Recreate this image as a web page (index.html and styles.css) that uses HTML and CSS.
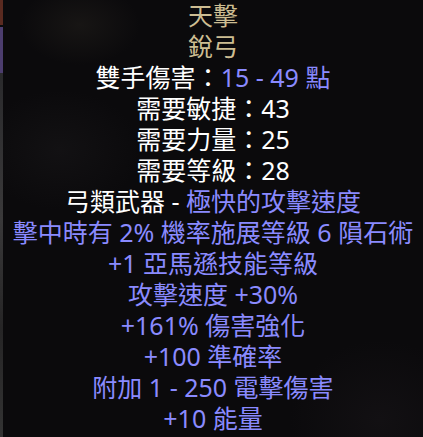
FILE: index.html
```html
<!DOCTYPE html>
<html>
<head>
<meta charset="utf-8">
<link rel="stylesheet" href="styles.css">
</head>
<body>
<div class="frame">
  <div class="edge">
    <div class="edge-red"></div>
    <div class="edge-purple"></div>
    <div class="edge-grey"></div>
  </div>
  <div class="tooltip">
    <div class="line name">天擊</div>
    <div class="line name">銳弓</div>
    <div class="line white">雙手傷害：<span class="blue">15 - 49 點</span></div>
    <div class="line white">需要敏捷：43</div>
    <div class="line white">需要力量：25</div>
    <div class="line white">需要等級：28</div>
    <div class="line white">弓類武器 - <span class="blue">極快的攻擊速度</span></div>
    <div class="line blue">擊中時有 2% 機率施展等級 6 隕石術</div>
    <div class="line blue">+1 亞馬遜技能等級</div>
    <div class="line blue">攻擊速度 +30%</div>
    <div class="line blue">+161% 傷害強化</div>
    <div class="line blue">+100 準確率</div>
    <div class="line blue">附加 1 - 250 電擊傷害</div>
    <div class="line blue">+10 能量</div>
  </div>
</div>
</body>
</html>
```
FILE: styles.css
```css
html, body {
  margin: 0;
  padding: 0;
  width: 423px;
  height: 437px;
  overflow: hidden;
  background: #0b0a0c;
}
.frame {
  display: flex;
  width: 423px;
  height: 437px;
  background:
    radial-gradient(ellipse 60px 40px at 80px 25px, rgba(60,55,45,0.25), transparent),
    radial-gradient(ellipse 80px 60px at 60px 150px, rgba(40,38,40,0.25), transparent),
    radial-gradient(ellipse 90px 80px at 380px 420px, rgba(35,30,35,0.3), transparent),
    #0b0a0c;
}
.edge {
  width: 3px;
  display: flex;
  flex-direction: column;
  flex: none;
}
.edge-red { height: 25px; background: #5a2a20; }
.edge-purple { height: 46px; margin-top: 2px; background: #4c3d6e; }
.edge-grey { flex: 1; background: linear-gradient(#2a2a2c, #3a393a 40%, #262526 70%, #333 100%); }
.tooltip {
  flex: 1;
  display: flex;
  flex-direction: column;
  align-items: center;
  padding-top: 0;
  padding-right: 0;
  font-family: "Noto Sans", "Noto Sans CJK TC", sans-serif;
  font-size: 25px;
  line-height: 31px;
}
.line {
  white-space: nowrap;
  height: 31px;
}
.name { color: #cdbd92; }
.white { color: #ffffff; }
.blue { color: #8a8aff; }
```
